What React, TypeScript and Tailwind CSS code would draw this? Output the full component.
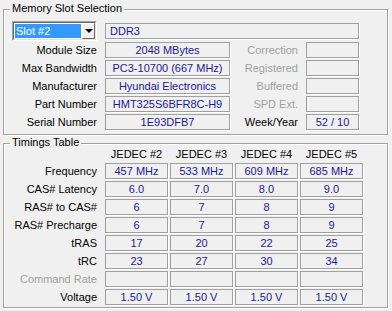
import React from "react";

const fieldCls =
  "h-[16px] border border-[#a0a0a0] shadow-[1px_1px_0_#fff] text-[#1a1a96] flex items-center whitespace-nowrap overflow-hidden";

function Field({ className, children, left }: { className: string; children?: React.ReactNode; left?: boolean }) {
  return (
    <div className={`${fieldCls} ${left ? "justify-start pl-[4px]" : "justify-center"} ${className}`}>{children}</div>
  );
}

function Group({ title, className, children }: { title: string; className: string; children: React.ReactNode }) {
  return (
    <div
      className={`relative ml-[3px] w-[385px] border border-[#a0a0a0] shadow-[inset_1px_1px_0_#fff,1px_1px_0_#fff] ${className}`}
    >
      <span className="absolute left-[6px] -top-[8px] px-[2px] bg-[#f0f0f0] leading-[13px]">{title}</span>
      {children}
    </div>
  );
}

const slotRows: [string, string, string, string, boolean][] = [
  ["Module Size", "2048 MBytes", "Correction", "", false],
  ["Max Bandwidth", "PC3-10700 (667 MHz)", "Registered", "", false],
  ["Manufacturer", "Hyundai Electronics", "Buffered", "", false],
  ["Part Number", "HMT325S6BFR8C-H9", "SPD Ext.", "", false],
  ["Serial Number", "1E93DFB7", "Week/Year", "52 / 10", true],
];

const timingRows: [string, string[], boolean][] = [
  ["Frequency", ["457 MHz", "533 MHz", "609 MHz", "685 MHz"], true],
  ["CAS# Latency", ["6.0", "7.0", "8.0", "9.0"], true],
  ["RAS# to CAS#", ["6", "7", "8", "9"], true],
  ["RAS# Precharge", ["6", "7", "8", "9"], true],
  ["tRAS", ["17", "20", "22", "25"], true],
  ["tRC", ["23", "27", "30", "34"], true],
  ["Command Rate", ["", "", "", ""], false],
  ["Voltage", ["1.50 V", "1.50 V", "1.50 V", "1.50 V"], true],
];

export default function App() {
  return (
    <div className="w-[392px] h-[311px] overflow-hidden bg-[#f0f0f0] pt-[9px] text-[11px] leading-[13px] text-black font-['Liberation_Sans',Arial,sans-serif]">
      <Group title="Memory Slot Selection" className="pt-[11px] pb-[4px]">
        <div className="flex items-center h-[20px]">
          <div className="ml-[8px] w-[85px] h-[20px] border-t border-l border-t-[#a0a0a0] border-l-[#a0a0a0] border-b border-r border-b-white border-r-white">
            <div className="h-full flex border-t border-l border-t-[#696969] border-l-[#696969] border-b border-r border-b-[#e3e3e3] border-r-[#e3e3e3] bg-white">
              <div className="flex-1 m-[1px] bg-[#3399ff] text-white flex items-center pl-[1px]">Slot #2</div>
              <div className="w-[13px] flex items-center justify-center bg-[#f0f0f0] border-t border-l border-t-white border-l-white border-b border-r border-b-[#696969] border-r-[#696969]">
                <div className="w-0 h-0 border-l-[4px] border-r-[4px] border-t-[4px] border-l-transparent border-r-transparent border-t-black" />
              </div>
            </div>
          </div>
          <Field className="ml-[8px] w-[254px]" left>
            DDR3
          </Field>
        </div>
        <div className="mt-[1px] flex flex-col gap-[2px]">
          {slotRows.map(([label, value, rlabel, rvalue, rActive]) => (
            <div key={label} className="flex items-center h-[16px]">
              <div className="w-[93px] text-right whitespace-nowrap">{label}</div>
              <Field className="ml-[8px] w-[125px]">{value}</Field>
              <div className={`w-[68px] text-right whitespace-nowrap ${rActive ? "text-black" : "text-[#a0a0a0]"}`}>{rlabel}</div>
              <Field className="ml-[8px] w-[53px]">{rvalue}</Field>
            </div>
          ))}
        </div>
      </Group>

      <Group title="Timings Table" className="mt-[8px] pt-[3px] pb-[2px]">
        <div className="flex h-[14px] items-center">
          <div className="w-[101px]" />
          <div className="flex gap-[2px]">
            {["JEDEC #2", "JEDEC #3", "JEDEC #4", "JEDEC #5"].map((h) => (
              <div key={h} className="w-[63px] text-center whitespace-nowrap">
                {h}
              </div>
            ))}
          </div>
        </div>
        <div className="mt-[2px] flex flex-col gap-[2px]">
          {timingRows.map(([label, vals, active]) => (
            <div key={label} className="flex items-center h-[16px]">
              <div className={`w-[93px] text-right whitespace-nowrap ${active ? "text-black" : "text-[#a0a0a0]"}`}>{label}</div>
              <div className="ml-[8px] flex gap-[2px]">
                {vals.map((v, i) => (
                  <Field key={i} className="w-[63px]">
                    {v}
                  </Field>
                ))}
              </div>
            </div>
          ))}
        </div>
      </Group>
    </div>
  );
}
